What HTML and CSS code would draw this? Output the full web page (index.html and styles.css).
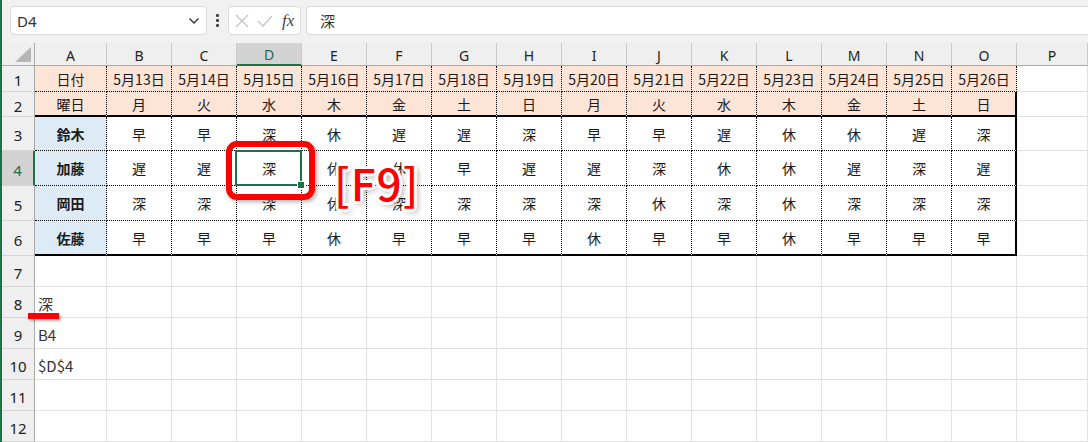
FILE: index.html
```html
<!DOCTYPE html>
<html>
    <head>
        <meta charset="UTF-8">
        <title>シフト表</title>
        <link rel="stylesheet" href="styles.css">
    </head>
    <body>
        <div class="excel">

            <div class="topbar">
                <div class="namebox">
                    <span>D4</span>
                    <svg class="chev" width="12" height="8" viewBox="0 0 12 8"><path d="M1.5 1.5 L6 6 L10.5 1.5" fill="none" stroke="#333" stroke-width="1.4"/></svg>
                </div>
                <div class="kebab"><i></i><i></i><i></i></div>
                <div class="fxbox">
                    <svg width="14" height="14" viewBox="0 0 14 14"><path d="M1 1 L13 13 M13 1 L1 13" stroke="#c4c4c4" stroke-width="1.3"/></svg>
                    <svg width="16" height="14" viewBox="0 0 16 14"><path d="M1 7 L6 12 L15 2" fill="none" stroke="#c4c4c4" stroke-width="1.3"/></svg>
                    <span class="fx">fx</span>
                </div>
                <div class="formula">深</div>
            </div>

            <div class="sheet">
                <!-- 列見出し -->
                <div class="corner"><span class="tri"></span></div>
                <div class="ch">A</div><div class="ch">B</div><div class="ch">C</div><div class="ch on">D</div>
                <div class="ch">E</div><div class="ch">F</div><div class="ch">G</div><div class="ch">H</div>
                <div class="ch">I</div><div class="ch">J</div><div class="ch">K</div><div class="ch">L</div>
                <div class="ch">M</div><div class="ch">N</div><div class="ch">O</div><div class="ch">P</div>

                <!-- 1 日付 -->
                <div class="rh">1</div>
                <div class="c t pk">日付</div>
                <div class="c t pk">5月13日</div><div class="c t pk">5月14日</div><div class="c t pk">5月15日</div><div class="c t pk">5月16日</div>
                <div class="c t pk">5月17日</div><div class="c t pk">5月18日</div><div class="c t pk">5月19日</div><div class="c t pk">5月20日</div>
                <div class="c t pk">5月21日</div><div class="c t pk">5月22日</div><div class="c t pk">5月23日</div><div class="c t pk">5月24日</div>
                <div class="c t pk">5月25日</div><div class="c t pk">5月26日</div>
                <div class="c"></div>

                <!-- 2 曜日 -->
                <div class="rh">2</div>
                <div class="c t pk b2">曜日</div>
                <div class="c t pk b2">月</div><div class="c t pk b2">火</div><div class="c t pk b2">水</div><div class="c t pk b2">木</div>
                <div class="c t pk b2">金</div><div class="c t pk b2">土</div><div class="c t pk b2">日</div><div class="c t pk b2">月</div>
                <div class="c t pk b2">火</div><div class="c t pk b2">水</div><div class="c t pk b2">木</div><div class="c t pk b2">金</div>
                <div class="c t pk b2">土</div><div class="c t pk b2 re">日</div>
                <div class="c"></div>

                <!-- 3 鈴木 -->
                <div class="rh">3</div>
                <div class="c t nm">鈴木</div>
                <div class="c t">早</div><div class="c t">早</div><div class="c t">深</div><div class="c t">休</div>
                <div class="c t">遅</div><div class="c t">遅</div><div class="c t">深</div><div class="c t">早</div>
                <div class="c t">早</div><div class="c t">遅</div><div class="c t">休</div><div class="c t">休</div>
                <div class="c t">遅</div><div class="c t re">深</div>
                <div class="c"></div>

                <!-- 4 加藤 -->
                <div class="rh on">4</div>
                <div class="c t nm">加藤</div>
                <div class="c t">遅</div><div class="c t">遅</div><div class="c t sel">深</div><div class="c t">休</div>
                <div class="c t">休</div><div class="c t">早</div><div class="c t">遅</div><div class="c t">遅</div>
                <div class="c t">深</div><div class="c t">休</div><div class="c t">休</div><div class="c t">遅</div>
                <div class="c t">深</div><div class="c t re">遅</div>
                <div class="c"></div>

                <!-- 5 岡田 -->
                <div class="rh">5</div>
                <div class="c t nm">岡田</div>
                <div class="c t">深</div><div class="c t">深</div><div class="c t">深</div><div class="c t">休</div>
                <div class="c t">深</div><div class="c t">深</div><div class="c t">深</div><div class="c t">深</div>
                <div class="c t">休</div><div class="c t">深</div><div class="c t">休</div><div class="c t">深</div>
                <div class="c t">深</div><div class="c t re">深</div>
                <div class="c"></div>

                <!-- 6 佐藤 -->
                <div class="rh">6</div>
                <div class="c t nm b2">佐藤</div>
                <div class="c t b2">早</div><div class="c t b2">早</div><div class="c t b2">早</div><div class="c t b2">休</div>
                <div class="c t b2">早</div><div class="c t b2">早</div><div class="c t b2">早</div><div class="c t b2">休</div>
                <div class="c t b2">早</div><div class="c t b2">早</div><div class="c t b2">休</div><div class="c t b2">早</div>
                <div class="c t b2">早</div><div class="c t b2 re">早</div>
                <div class="c"></div>

                <!-- 7 -->
                <div class="rh">7</div>
                <div class="c"></div><div class="c"></div><div class="c"></div><div class="c"></div><div class="c"></div><div class="c"></div>
                <div class="c"></div><div class="c"></div><div class="c"></div><div class="c"></div><div class="c"></div><div class="c"></div>
                <div class="c"></div><div class="c"></div><div class="c"></div><div class="c"></div>

                <!-- 8 -->
                <div class="rh">8</div>
                <div class="c lt">深</div><div class="c"></div><div class="c"></div><div class="c"></div><div class="c"></div><div class="c"></div>
                <div class="c"></div><div class="c"></div><div class="c"></div><div class="c"></div><div class="c"></div><div class="c"></div>
                <div class="c"></div><div class="c"></div><div class="c"></div><div class="c"></div>

                <!-- 9 -->
                <div class="rh">9</div>
                <div class="c lt">B4</div><div class="c"></div><div class="c"></div><div class="c"></div><div class="c"></div><div class="c"></div>
                <div class="c"></div><div class="c"></div><div class="c"></div><div class="c"></div><div class="c"></div><div class="c"></div>
                <div class="c"></div><div class="c"></div><div class="c"></div><div class="c"></div>

                <!-- 10 -->
                <div class="rh">10</div>
                <div class="c lt">$D$4</div><div class="c"></div><div class="c"></div><div class="c"></div><div class="c"></div><div class="c"></div>
                <div class="c"></div><div class="c"></div><div class="c"></div><div class="c"></div><div class="c"></div><div class="c"></div>
                <div class="c"></div><div class="c"></div><div class="c"></div><div class="c"></div>

                <!-- 11 -->
                <div class="rh">11</div>
                <div class="c"></div><div class="c"></div><div class="c"></div><div class="c"></div><div class="c"></div><div class="c"></div>
                <div class="c"></div><div class="c"></div><div class="c"></div><div class="c"></div><div class="c"></div><div class="c"></div>
                <div class="c"></div><div class="c"></div><div class="c"></div><div class="c"></div>

                <!-- 12 -->
                <div class="rh">12</div>
                <div class="c"></div><div class="c"></div><div class="c"></div><div class="c"></div><div class="c"></div><div class="c"></div>
                <div class="c"></div><div class="c"></div><div class="c"></div><div class="c"></div><div class="c"></div><div class="c"></div>
                <div class="c"></div><div class="c"></div><div class="c"></div><div class="c"></div>

                <!-- 注釈 -->
                <div class="redbox"></div>
                <div class="key">[F9]</div>
                <div class="underline"></div>
            </div>

        </div>
    </body>
</html>
```

FILE: styles.css
```css
*{
    box-sizing: border-box;
}
body{
    margin: 0;
    background: #fff;
    overflow: hidden;
}
.excel{
    width: 1088px;
    height: 442px;
    border-left: 2px solid #1e7145;
    font-family: "Noto Sans", "Noto Sans CJK JP", sans-serif;
    color: #222;
}

/* 数式バー */
.topbar{
    height: 43px;
    background: #f1f1f1;
    display: flex;
    align-items: flex-start;
    padding: 6px 0 0 8px;
}
.namebox{
    width: 197px;
    height: 29px;
    background: #fff;
    border: 1px solid #dadada;
    border-radius: 4px;
    display: flex;
    align-items: center;
    justify-content: space-between;
    padding: 0 6px 0 6px;
    font-size: 15px;
    color: #333;
}
.kebab{
    width: 21px;
    height: 29px;
    display: flex;
    flex-direction: column;
    align-items: center;
    justify-content: center;
    gap: 2px;
}
.kebab i{
    width: 3px;
    height: 3px;
    background: #444;
    border-radius: 1px;
}
.fxbox{
    width: 73px;
    height: 29px;
    background: #fff;
    border: 1px solid #dadada;
    border-radius: 4px;
    display: flex;
    align-items: center;
    gap: 8px;
    padding-left: 6px;
}
.fx{
    font-family: "Liberation Serif", serif;
    font-style: italic;
    font-size: 17px;
    color: #444;
    margin-left: 1px;
}
.formula{
    flex: 1;
    height: 29px;
    margin-left: 5px;
    background: #fff;
    border: 1px solid #dadada;
    border-right: none;
    border-radius: 4px 0 0 4px;
    padding-left: 13px;
    font-family: "Noto Sans CJK JP", sans-serif;
    font-size: 15px;
    line-height: 27px;
    color: #333;
}

/* シート */
.sheet{
    position: relative;
    display: grid;
    grid-template-columns: 33px 72px repeat(14, 65px) 71px;
    grid-template-rows: 23px 26px 25px 34px repeat(3, 35px) repeat(6, 31px);
}
.corner{
    position: relative;
    background: #efefef;
    border-right: 1px solid #a9a9a9;
    border-bottom: 1px solid #a9a9a9;
}
.tri{
    position: absolute;
    right: 3px;
    bottom: 3px;
    width: 0;
    height: 0;
    border-left: 16px solid transparent;
    border-bottom: 15px solid #b5b5b5;
}
.ch{
    background: #efefef;
    border-right: 1px solid #c9c9c9;
    border-bottom: 1px solid #a9a9a9;
    display: flex;
    align-items: center;
    justify-content: center;
    font-size: 14px;
    color: #222;
    padding-top: 2px;
}
.ch.on{
    background: #d3d3d3;
    border-bottom: 2px solid #1e7145;
    color: #1e6b45;
}
.rh{
    background: #efefef;
    border-right: 1px solid #a9a9a9;
    border-bottom: 1px solid #d4d4d4;
    display: flex;
    align-items: center;
    justify-content: center;
    font-size: 15px;
    color: #222;
    padding-top: 3px;
}
.rh.on{
    background: #d3d3d3;
    border-right: 2px solid #1e7145;
    color: #1e6b45;
}
.c{
    border-right: 1px solid #e1e1e1;
    border-bottom: 1px solid #e1e1e1;
    display: flex;
    align-items: center;
    justify-content: center;
    font-family: "Noto Sans CJK JP", sans-serif;
    font-size: 14px;
    color: #1a1a1a;
}
.t{
    border-right: 1px dotted #000;
    border-bottom: 1px dotted #000;
}
.pk{
    background: #fce4d6;
}
.nm{
    background: #ddebf7;
    font-weight: bold;
}
.b2{
    border-bottom: 2px solid #000;
}
.re{
    border-right: 2px solid #000;
}
.lt{
    justify-content: flex-start;
    padding: 2px 0 0 3px;
    font-size: 15px;
    color: #333;
}

/* 選択セル */
.sel{
    position: relative;
}
.sel:before{
    content: "";
    position: absolute;
    left: -2px;
    top: -1px;
    right: -1px;
    bottom: -1px;
    border: 2px solid #1e7145;
}
.sel:after{
    content: "";
    position: absolute;
    right: -4px;
    bottom: -4px;
    width: 6px;
    height: 6px;
    background: #1e7145;
    border: 1px solid #fff;
}

/* 注釈 */
.redbox{
    position: absolute;
    left: 224px;
    top: 98px;
    width: 89px;
    height: 59px;
    border: 6px solid #ff0000;
    border-radius: 11px;
    box-shadow: 2px 2px 4px rgba(0,0,0,0.3);
}
.key{
    position: absolute;
    left: 332px;
    top: 113px;
    font-family: "Noto Sans CJK JP", sans-serif;
    font-weight: 500;
    font-size: 44px;
    line-height: 52px;
    color: #ff0000;
    letter-spacing: 1px;
    text-shadow: -3px 0 #fff, 3px 0 #fff, 0 -3px #fff, 0 3px #fff,
        -2px -2px #fff, 2px 2px #fff, -2px 2px #fff, 2px -2px #fff,
        3px 3px 6px rgba(0,0,0,0.45);
}
.underline{
    position: absolute;
    left: 26px;
    top: 270px;
    width: 31px;
    height: 6px;
    background: #ff0000;
    box-shadow: 2px 2px 3px rgba(0,0,0,0.3);
}
```
